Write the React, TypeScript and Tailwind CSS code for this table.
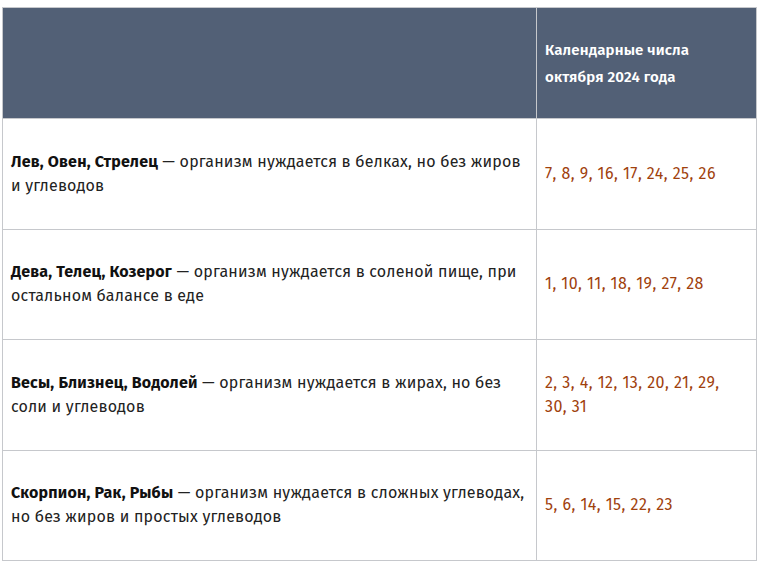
const ROWS = [
  {
    signs: "Лев, Овен, Стрелец",
    text: "организм нуждается в белках, но без жиров и углеводов",
    dates: "7, 8, 9, 16, 17, 24, 25, 26",
  },
  {
    signs: "Дева, Телец, Козерог",
    text: "организм нуждается в соленой пище, при остальном балансе в еде",
    dates: "1, 10, 11, 18, 19, 27, 28",
  },
  {
    signs: "Весы, Близнец, Водолей",
    text: "организм нуждается в жирах, но без соли и углеводов",
    dates: "2, 3, 4, 12, 13, 20, 21, 29, 30, 31",
  },
  {
    signs: "Скорпион, Рак, Рыбы",
    text: "организм нуждается в сложных углеводах, но без жиров и простых углеводов",
    dates: "5, 6, 14, 15, 22, 23",
  },
];

export default function App() {
  return (
    <div className="w-[762px] h-[565px] bg-white pt-[7px] pl-[2px] font-['Fira_Sans','Noto_Sans',sans-serif]">
      <table className="w-[754px] border-collapse table-fixed">
        <colgroup>
          <col className="w-[534px]" />
          <col className="w-[220px]" />
        </colgroup>
        <thead>
          <tr className="h-[111px] bg-[#526076]">
            <th className="border border-[#c6c8cc]" />
            <th className="border border-[#c6c8cc] px-2 pt-[1px] text-left align-middle text-[15px] leading-[27px] font-semibold text-white tracking-[0.15px]">
              Календарные числа
              <br />
              октября 2024 года
            </th>
          </tr>
        </thead>
        <tbody>
          {ROWS.map((row) => (
            <tr key={row.signs} className="h-[110.5px]">
              <td className="border border-[#c6c8cc] pl-2 pr-2 align-middle text-[16px] leading-[24px] text-[#222] tracking-[0.2px]">
                <b className="font-bold text-[#111]">{row.signs}</b> — {row.text}
              </td>
              <td className="border border-[#c6c8cc] pl-2 pr-4 align-middle text-[16px] leading-[24px] text-[#a0410d] tracking-[0.45px]">
                {row.dates}
              </td>
            </tr>
          ))}
        </tbody>
      </table>
    </div>
  );
}
